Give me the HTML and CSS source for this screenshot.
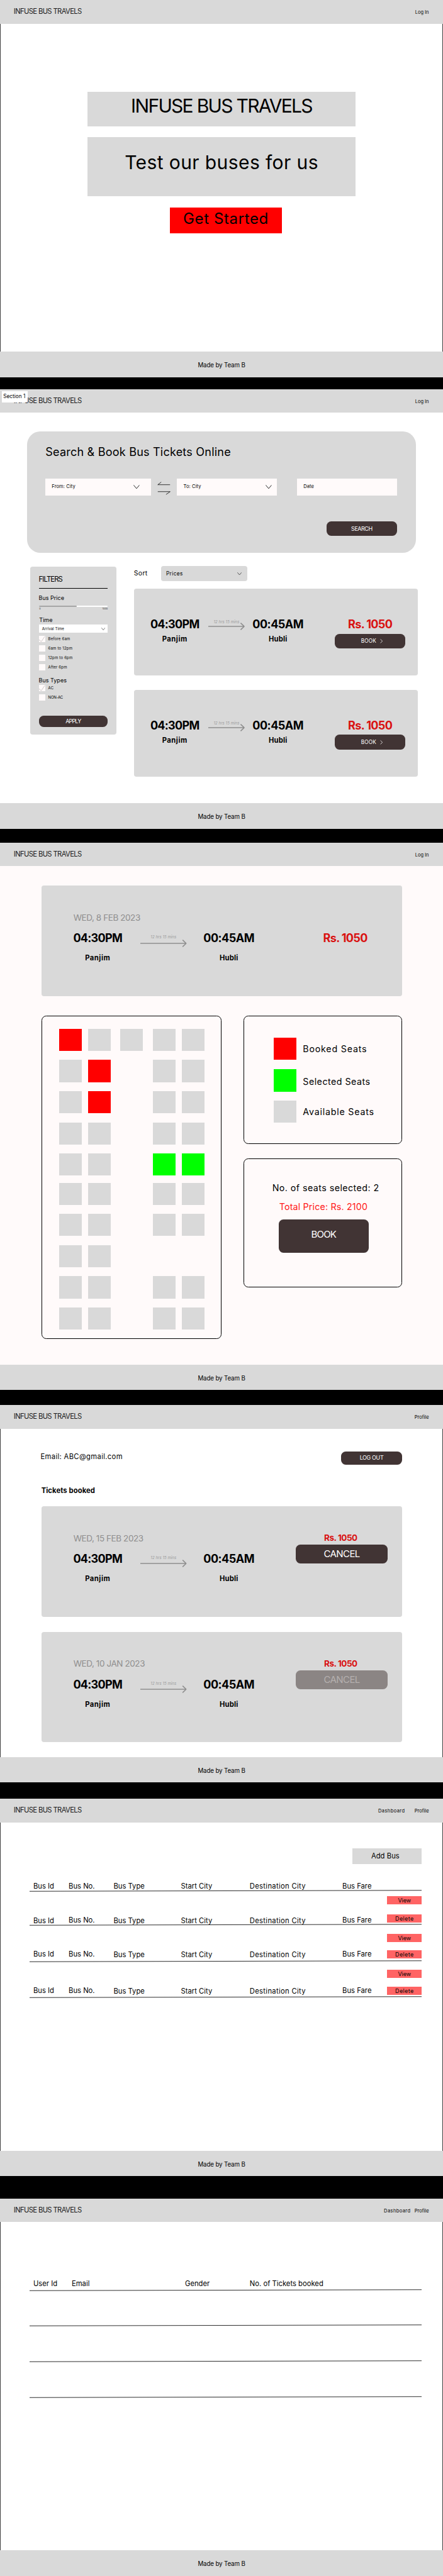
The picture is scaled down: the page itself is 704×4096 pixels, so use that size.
FILE: index.html
```
<!DOCTYPE html>
<html lang="en">
<head>
<meta charset="utf-8">
<title>Infuse Bus Travels</title>
<link rel="stylesheet" href="styles.css">
</head>
<body>
<svg class="defs" aria-hidden="true">
  <symbol id="chev" viewBox="0 0 14 9" preserveAspectRatio="none"><path d="M.6.6 7 8.1 13.4.6" fill="none" stroke="currentColor" stroke-width="1.2"/></symbol>
  <symbol id="arrow" viewBox="0 0 77 16"><path d="M0 8H76M68.5.8 76 8l-7.5 7.2" fill="none" stroke="#8e8e8e" stroke-width="2"/></symbol>
  <symbol id="arrow-long" viewBox="0 0 98 16"><path d="M0 8H97M89.5.8 97 8l-7.5 7.2" fill="none" stroke="#8e8e8e" stroke-width="2"/></symbol>
  <symbol id="rule" viewBox="0 0 830 4" preserveAspectRatio="none"><path d="M0 3 830 1" fill="none" stroke="#000" stroke-width="1.1"/></symbol>
  <symbol id="tick" viewBox="0 0 13 13"><path d="M0 8.2 4.7 12.4 12.4 1" fill="none" stroke="#bdb7b7" stroke-width="1"/></symbol>
</svg>
<div class="sheet">

<section class="screen">
  <header class="bar"><span class="brand">INFUSE BUS TRAVELS</span><nav class="nav"><a>Log In</a></nav></header>
  <main class="home framed">
    <h1 class="banner">INFUSE BUS TRAVELS</h1>
    <p class="tagline">Test our buses for us</p>
    <a class="start">Get Started</a>
  </main>
  <footer class="foot">Made by Team B</footer>
</section>

<section class="screen s-search">
  <span class="tag">Section 1</span>
  <header class="bar"><span class="brand">INFUSE BUS TRAVELS</span><nav class="nav"><a>Log In</a></nav></header>
  <main class="search-page">
    <div class="finder">
      <h2>Search &amp; Book Bus Tickets Online</h2>
      <div class="fields">
        <div class="field from">From: City<svg class="chev"><use href="#chev"/></svg></div>
        <svg class="swap" viewBox="0 0 28 28"><path d="M27 6.3H1L8.3.7M1 21H27.200L18.500 27" fill="none" stroke="#111" stroke-width="1.1"/></svg>
        <div class="field to">To: City<svg class="chev"><use href="#chev"/></svg></div>
        <div class="field date">Date</div>
      </div>
      <button class="btn search">SEARCH</button>
    </div>
    <div class="results">
      <aside class="filters">
        <h3>FILTERS</h3>
        <h4 class="price-h">Bus Price</h4>
        <div class="slider"><i></i></div>
        <div class="range"><span>0</span><span>1000</span></div>
        <h4 class="time-h">Time</h4>
        <div class="select">Arrival Time<svg><use href="#chev"/></svg></div>
        <ul class="checks">
          <li><i><svg><use href="#tick"/></svg></i>Before 6am</li>
          <li><i></i>6am to 12pm</li>
          <li><i></i>12pm to 6pm</li>
          <li><i></i>After 6pm</li>
        </ul>
        <h4 class="types-h">Bus Types</h4>
        <ul class="checks">
          <li><i><svg><use href="#tick"/></svg></i>AC</li>
          <li class="caps"><i></i>NON-AC</li>
        </ul>
        <button class="btn apply">APPLY</button>
      </aside>
      <div class="list">
        <div class="sort"><span>Sort</span><div class="sort-box">Prices<svg><use href="#chev"/></svg></div></div>
        <article class="trip">
          <div class="stop dep"><b>04:30PM</b><span>Panjim</span></div>
          <div class="leg"><em>12 hrs 15 mins</em><svg><use href="#arrow"/></svg></div>
          <div class="stop arr"><b>00:45AM</b><span>Hubli</span></div>
          <div class="fare"><b>Rs. 1050</b><button class="btn book">BOOK<svg viewBox="0 0 6 9"><path d="M.7.5 5 4.500.7 8.500" fill="none" stroke="#fff"/></svg></button></div>
        </article>
        <article class="trip">
          <div class="stop dep"><b>04:30PM</b><span>Panjim</span></div>
          <div class="leg"><em>12 hrs 15 mins</em><svg><use href="#arrow"/></svg></div>
          <div class="stop arr"><b>00:45AM</b><span>Hubli</span></div>
          <div class="fare"><b>Rs. 1050</b><button class="btn book">BOOK<svg viewBox="0 0 6 9"><path d="M.7.5 5 4.500.7 8.500" fill="none" stroke="#fff"/></svg></button></div>
        </article>
      </div>
    </div>
  </main>
  <footer class="foot">Made by Team B</footer>
</section>

<section class="screen s-seats">
  <header class="bar"><span class="brand">INFUSE BUS TRAVELS</span><nav class="nav"><a>Log In</a></nav></header>
  <main class="seat-page">
    <article class="ticket">
      <div class="journey">
        <time>WED, 8 FEB 2023</time>
        <div class="way">
          <div class="stop dep"><b>04:30PM</b><span>Panjim</span></div>
          <div class="leg"><em>12 hrs 15 mins</em><svg><use href="#arrow-long"/></svg></div>
          <div class="stop arr"><b>00:45AM</b><span>Hubli</span></div>
        </div>
      </div>
      <div class="cost big"><b>Rs. 1050</b></div>
    </article>
    <div class="booking">
      <div class="seats">
        <i class="r"></i><i></i><i></i><i></i><i></i>
        <i></i><i class="r"></i><i class="n"></i><i></i><i></i>
        <i></i><i class="r"></i><i class="n"></i><i></i><i></i>
        <i></i><i></i><i class="n"></i><i></i><i></i>
        <i></i><i></i><i class="n"></i><i class="g"></i><i class="g"></i>
        <i></i><i></i><i class="n"></i><i></i><i></i>
        <i></i><i></i><i class="n"></i><i></i><i></i>
        <i></i><i></i><i class="n"></i><i class="n"></i><i class="n"></i>
        <i></i><i></i><i class="n"></i><i></i><i></i>
        <i></i><i></i><i class="n"></i><i></i><i></i>
      </div>
      <div class="side">
        <ul class="legend">
          <li><i class="r"></i><span>Booked Seats</span></li>
          <li><i class="g"></i><span class="sel">Selected Seats</span></li>
          <li><i></i><span>Available Seats</span></li>
        </ul>
        <div class="summary">
          <p>No. of seats selected: 2</p>
          <p class="total">Total Price: Rs. 2100</p>
          <button class="btn confirm">BOOK</button>
        </div>
      </div>
    </div>
  </main>
  <footer class="foot">Made by Team B</footer>
</section>

<section class="screen s-profile">
  <header class="bar"><span class="brand">INFUSE BUS TRAVELS</span><nav class="nav"><a>Profile</a></nav></header>
  <main class="profile framed">
    <div class="account"><span>Email: ABC@gmail.com</span><button class="btn logout">LOG OUT</button></div>
    <h3>Tickets booked</h3>
    <article class="ticket">
      <div class="journey">
        <time>WED, 15 FEB 2023</time>
        <div class="way">
          <div class="stop dep"><b>04:30PM</b><span>Panjim</span></div>
          <div class="leg"><em>12 hrs 15 mins</em><svg><use href="#arrow-long"/></svg></div>
          <div class="stop arr"><b>00:45AM</b><span>Hubli</span></div>
        </div>
      </div>
      <div class="cost"><b>Rs. 1050</b><button class="btn cancel">CANCEL</button></div>
    </article>
    <article class="ticket">
      <div class="journey">
        <time>WED, 10 JAN 2023</time>
        <div class="way">
          <div class="stop dep"><b>04:30PM</b><span>Panjim</span></div>
          <div class="leg"><em>12 hrs 15 mins</em><svg><use href="#arrow-long"/></svg></div>
          <div class="stop arr"><b>00:45AM</b><span>Hubli</span></div>
        </div>
      </div>
      <div class="cost"><b>Rs. 1050</b><button class="btn cancel off">CANCEL</button></div>
    </article>
  </main>
  <footer class="foot">Made by Team B</footer>
</section>

<section class="screen s-buses">
  <header class="bar"><span class="brand">INFUSE BUS TRAVELS</span><nav class="nav"><a class="dash">Dashboard</a><a>Profile</a></nav></header>
  <main class="buses framed">
    <button class="add">Add Bus</button>
    <div class="row head"><span>Bus Id</span><span>Bus No.</span><span class="low">Bus Type</span><span class="low">Start City</span><span class="low wide">Destination City</span><span>Bus Fare</span></div>
    <svg class="rule"><use href="#rule"/></svg>
    <div class="row one"><span class="low">Bus Id</span><span>Bus No.</span><span class="low">Bus Type</span><span class="low">Start City</span><span class="low wide">Destination City</span><span>Bus Fare</span><div class="acts"><a>View</a><a class="del">Delete</a></div></div>
    <svg class="rule"><use href="#rule"/></svg>
    <div class="row two"><span>Bus Id</span><span>Bus No.</span><span class="low">Bus Type</span><span class="low">Start City</span><span class="low wide">Destination City</span><span>Bus Fare</span><div class="acts"><a>View</a><a class="del">Delete</a></div></div>
    <svg class="rule"><use href="#rule"/></svg>
    <div class="row three"><span>Bus Id</span><span>Bus No.</span><span class="low">Bus Type</span><span class="low">Start City</span><span class="low wide">Destination City</span><span>Bus Fare</span><div class="acts"><a>View</a><a class="del">Delete</a></div></div>
    <svg class="rule"><use href="#rule"/></svg>
  </main>
  <footer class="foot">Made by Team B</footer>
</section>

<section class="screen s-users">
  <header class="bar"><span class="brand">INFUSE BUS TRAVELS</span><nav class="nav tight"><a class="dash">Dashboard</a><a>Profile</a></nav></header>
  <main class="users framed">
    <div class="row"><span>User Id</span><span>Email</span><span>Gender</span><span>No. of Tickets booked</span></div>
    <svg class="rule"><use href="#rule"/></svg>
    <svg class="rule"><use href="#rule"/></svg>
    <svg class="rule"><use href="#rule"/></svg>
    <svg class="rule"><use href="#rule"/></svg>
  </main>
  <footer class="foot">Made by Team B</footer>
</section>

</div>
</body>
</html>
```
FILE: styles.css
```
*{box-sizing:border-box;margin:0;padding:0}
html,body{background:#000}
body{overflow-x:hidden}
ul{list-style:none}
svg{display:block;overflow:visible}
.defs{width:0;height:0;position:absolute}
button{border:0;font:inherit;color:inherit}
.sheet{zoom:.751;width:937.5px;height:5454px;overflow:hidden;font-family:Inter,"Open Sans",sans-serif;color:#000;background:#000;white-space:nowrap}

/* screen shell */
.screen{position:relative;background:#fff}
.s-search{margin-top:25px}
.s-seats{margin-top:29px}
.s-profile{margin-top:32px}
.s-buses{margin-top:35px}
.s-users{margin-top:47px}
.framed{box-shadow:inset 1px 0 #000,inset -1px 0 #000}
.bar{height:50px;padding:0 30px 0 29px;background:#d9d9d9;display:flex;justify-content:space-between}
.brand{font-size:15px;line-height:49px;letter-spacing:-.057em;color:#1c1c1c}
.nav{display:flex;gap:20.4px;font-size:10px;line-height:53px}
.nav.tight{gap:8.4px}
.dash{letter-spacing:.055em}
.foot{height:54px;background:#d9d9d9;text-align:center;font-size:13px;line-height:59px;letter-spacing:-.014em}
.tag{position:absolute;left:4px;top:4px;width:54px;height:24px;background:#fff;font-size:11px;line-height:23px;padding-left:3px}
.btn{display:flex;align-items:center;justify-content:center;background:#413434;color:#fff;border-radius:10px}

/* home */
.home{height:695px;padding-top:145px;display:flex;flex-direction:column;align-items:center}
.banner,.tagline{width:566.700px;background:#d9d9d9;text-align:center;font-size:40px;font-weight:400}
.banner{height:72px;line-height:61px;letter-spacing:-.057em}
.tagline{height:125.500px;line-height:109px;margin-top:23.300px;letter-spacing:.013em}
.start{width:236.200px;height:54px;margin:24.200px 0 0 18.400px;background:#f00;text-align:center;font-size:32px;line-height:47px;letter-spacing:.025em}

/* search */
.search-page{height:827px;padding-top:40px}
.finder{width:823.700px;height:256px;margin-left:56.800px;padding:23.500px 40px 0 39.400px;background:#d9d9d9;border-radius:28px}
.finder h2{font-size:24px;font-weight:400;line-height:40px;letter-spacing:.012em}
.fields{display:flex;margin-top:36.200px}
.field{height:35px;background:#fffafa;font-size:10px;line-height:35px;letter-spacing:.017em;padding-left:13.400px;display:flex;align-items:center;justify-content:space-between}
.from{width:223px;padding-right:23.300px}
.to{width:211.600px;padding-right:11.400px}
.date{width:211.600px;margin-left:42.400px}
.chev{width:13.200px;height:8.600px}
.swap{width:28px;height:28px;margin:6px 13.700px 0 13.900px}
.search{width:150px;height:31px;margin:55.300px 0 0 auto;font-size:12px;letter-spacing:-.053em;padding-bottom:0}
.results{display:flex;align-items:flex-start}
.filters{width:183px;height:356px;margin:30px 0 0 64px;padding:16.700px 19px 0 18px;background:#d9d9d9;border-radius:5px}
.filters h3{font-size:15px;font-weight:400;line-height:20px;letter-spacing:-.077em;padding-bottom:8.300px;border-bottom:1.300px solid #000}
.filters h4{font-size:12px;font-weight:400;line-height:20px}
.price-h{margin-top:9.500px}
.slider{height:3px;margin:6.200px 0 0 1px;background:#fff;border-radius:2px}
.slider i{display:block;width:80px;height:3px;background:#a6a6a6;border-radius:2px}
.range{display:flex;justify-content:space-between;margin:2px 0 0 1px;font-size:5px;line-height:6px;color:#333}
.filters .time-h{margin-top:9px;padding-left:1px}
.select{height:17px;margin:1px 0 7px 1px;padding:0 5px 0 6px;background:#fff;font-size:8px;letter-spacing:.012em;display:flex;align-items:center;justify-content:space-between}
.select svg{width:8.300px;height:5.500px}
.checks{display:flex;flex-direction:column;gap:7px;margin-left:1px}
.checks li{display:flex;gap:6px;font-size:8px;line-height:12.500px;letter-spacing:.035em}
.checks .caps{letter-spacing:-.03em}
.checks i{width:13px;height:13px;background:#fffafa}
.checks svg{width:13px;height:13px}
.filters .types-h{margin:10px 0 1px}
.apply{width:146px;height:25px;margin-top:31px;font-size:12px;letter-spacing:-.092em}
.list{margin:29px 0 0 36.300px}
.sort{display:flex;font-size:14px;line-height:33px;letter-spacing:.03em}
.sort span{width:58px}
.sort-box{width:182px;height:32px;padding:0 12px 0 10.200px;background:#d9d9d9;border-radius:5px;font-size:11px;letter-spacing:.049em;display:flex;align-items:center;justify-content:space-between}
.sort-box svg{width:9.500px;height:6px}
.trip{width:601px;height:184px;margin-top:14.800px;padding:61px 0 0 34px;background:#d9d9d9;border-radius:5px;display:flex}
.trip+.trip{margin-top:30.200px}

/* route pieces */
.stop{display:flex;flex-direction:column;align-items:center}
.dep{width:105px}
.arr{width:108.700px}
.stop b{font-size:24px;font-weight:700;line-height:30px;letter-spacing:-.04em}
.arr b{letter-spacing:-.027em}
.stop span{font-size:15px;font-weight:700;line-height:20px;margin-top:6px;letter-spacing:.045em}
.arr span{letter-spacing:.015em}
.leg{width:77px;margin:4.500px 16px 0 18.600px;text-align:center}
.leg em{display:block;font-size:8px;line-height:10px;letter-spacing:.015em;color:#999}
.leg svg{width:77px;height:16px;margin-top:-4px}
.fare{width:150px;margin-left:65.700px;text-align:center}
.fare b{display:block;font-size:24px;line-height:30px;letter-spacing:-.035em;color:#d91111}
.book{width:150px;height:30.700px;margin-top:4px;gap:8px;font-size:11px;letter-spacing:.021em;padding-left:8px}
.book svg{width:6px;height:9px}

/* ticket card */
.ticket{width:763.700px;height:234px;background:#d9d9d9;border-radius:5px;display:flex}
.journey{width:539px;padding:53px 0 0 66.800px}
.journey time{display:block;font-size:18px;line-height:30px;letter-spacing:-.031em;color:#8e8e8e;padding-left:1.200px}
.way{display:flex;margin-top:14.700px}
.way .stop span{margin-top:16.300px}
.way .leg{width:98px;margin:6.300px 35px 0 37.800px}
.way .leg svg{width:98px;margin-top:0}
.cost{width:194px;padding-top:52px;text-align:center}
.cost b{display:block;font-size:18px;line-height:30px;letter-spacing:-.035em;color:#d91111;padding-right:5px}
.cost.big{padding-top:97.700px;text-align:left}
.cost.big b{font-size:24px;padding-left:57.400px}
.cancel{width:193.600px;height:40px;font-size:20px;letter-spacing:-.039em;padding-bottom:2px}
.cancel.off{background:#8b8584;color:#b5b0af}

/* seats */
.seat-page{height:1055px;padding:41px 0 0 87.400px;background:#fffafa}
.booking{display:flex;margin-top:41px}
.seats{width:381.500px;height:685.500px;padding:27px 0 0 36.500px;border:1px solid #000;border-radius:10px;display:grid;grid-template-columns:61px 68px 69.300px 61px 48px;grid-template-rows:66px 66px 66px 66px 62px 66px 66px 66px 66px 47px}
.seats i,.legend i{width:48px;height:47px;background:#d9d9d9}
.seats .r,.legend .r{background:#f00}
.seats .g,.legend .g{background:#0f0}
.seats .n{background:none}
.side{width:335.300px;margin-left:46.800px}
.legend{height:272.500px;padding:46px 0 0 62.200px;border:1px solid #000;border-radius:10px;display:flex;flex-direction:column;gap:19px}
.legend li{display:flex;gap:13.700px;font-size:19px;line-height:48px;letter-spacing:.055em}
.legend .sel{line-height:52px;height:47px;letter-spacing:.033em}
.summary{height:273px;margin-top:30.500px;padding-top:46px;border:1px solid #000;border-radius:10px;text-align:center;font-size:19px;line-height:30px;letter-spacing:.031em;display:flex;flex-direction:column;align-items:center}
.summary p{padding-left:12px}
.summary .total{margin-top:10px;padding-left:2px;letter-spacing:.012em;color:#ff1616}
.confirm{width:190px;height:70px;margin:12px 0 0 3px;font-size:20px;letter-spacing:-.055em;padding-bottom:7px}

/* profile */
.profile{height:695px;padding:49px 0 0 87.400px}
.account{width:763.700px;height:27px;display:flex;justify-content:space-between;font-size:15px;line-height:22px;letter-spacing:.029em}
.account span{margin-left:-1.500px}
.logout{width:129.600px;height:27px;font-size:12px;letter-spacing:-.043em}
.profile h3{font-size:15px;font-weight:700;line-height:20px;letter-spacing:.008em;margin:45.700px 0 22.300px}
.ticket+.ticket{margin-top:32px}

/* admin tables */
.buses{height:695px;padding:54px 0 0 62.800px}
.add{display:block;width:147px;height:34px;margin-left:682.600px;padding-right:7px;background:#d9d9d9;font-size:15px;line-height:33px;letter-spacing:.003em;text-align:center}
.row{width:829.600px;padding-left:7.700px;display:grid;grid-template-columns:74.700px 95.100px 142.700px 145.400px 196.100px 95px 73px;align-items:end;font-size:15px;line-height:14px}
.low{margin-bottom:-1px}
.row .wide{letter-spacing:.028em}
.rule{width:829.600px;height:4px}
.head{margin:39.300px 0 1.200px}
.one{height:68.500px;padding-bottom:1.400px}
.two{height:72.200px;padding-bottom:5px}
.three{height:72.200px;padding-bottom:4.400px}
.acts{align-self:start;display:flex;flex-direction:column;gap:22px;padding-top:9.500px;height:40px}
.two .acts{padding-top:16.800px;gap:18px}
.three .acts{padding-top:16.600px;gap:19px}
.acts a{flex:none;height:17px;background:#ff6464;text-align:center;font-size:12px;line-height:17.500px}
.acts .del{letter-spacing:.041em}
.users{height:695px;padding:123px 0 0 62.800px}
.users .row{grid-template-columns:81.300px 239.700px 136.900px auto;margin-bottom:5.600px}
.users .rule+.rule{margin-top:69.500px}
.users .rule+.rule+.rule{margin-top:72.100px}
```
